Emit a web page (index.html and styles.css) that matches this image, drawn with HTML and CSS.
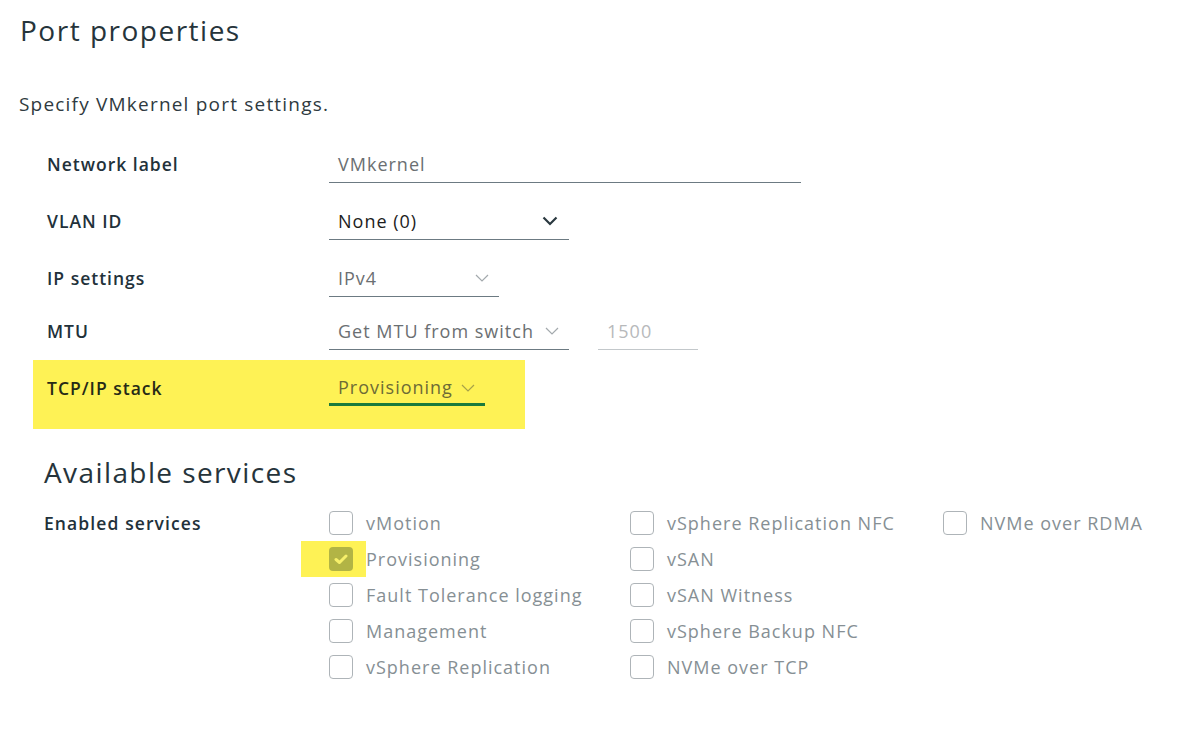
FILE: index.html
```html
<!doctype html>
<html lang="en-us">
  <head>
    <meta charset="utf-8">
    <title>Port properties</title>
    <link rel="stylesheet" href="styles.css">
  </head>
  <body>
    <h1 class="title">Port properties</h1>
    <p class="intro">Specify VMkernel port settings.</p>

    <div class="form">
        <div class="row r1">
            <span class="label">Network label</span>
            <div class="field text wide"><span class="val muted">VMkernel</span></div>
        </div>
        <div class="row r2">
            <span class="label">VLAN ID</span>
            <div class="field select w240">
                <span class="val dark">None (0)</span>
                <svg class="chev bold" width="16" height="10" viewBox="0 0 16 10"><path d="M1.5 1.5 L8 8 L14.5 1.5" /></svg>
            </div>
        </div>
        <div class="row r3">
            <span class="label">IP settings</span>
            <div class="field select w170">
                <span class="val muted">IPv4</span>
                <svg class="chev" width="14" height="8" viewBox="0 0 14 8"><path d="M1 1 L7 7 L13 1" /></svg>
            </div>
        </div>
        <div class="row r4">
            <span class="label">MTU</span>
            <div class="field select w240">
                <span class="val muted">Get MTU from switch</span>
                <svg class="chev" width="14" height="8" viewBox="0 0 14 8"><path d="M1 1 L7 7 L13 1" /></svg>
            </div>
            <div class="field text w100 off"><span class="val faint">1500</span></div>
        </div>
        <div class="row hl">
            <span class="label">TCP/IP stack</span>
            <div class="field select w156 focus">
                <span class="val olive">Provisioning</span>
                <svg class="chev" width="14" height="8" viewBox="0 0 14 8"><path d="M1 1 L7 7 L13 1" /></svg>
            </div>
        </div>
    </div>

    <h2 class="section">Available services</h2>
    <div class="services">
        <span class="label">Enabled services</span>
        <div class="col c1">
            <label class="cb"><span class="box"></span>vMotion</label>
            <label class="cb"><span class="mark"><span class="box checked"><svg width="14" height="11" viewBox="0 0 14 11"><path d="M2 5.5 L5.5 8.5 L12 2" /></svg></span></span>Provisioning</label>
            <label class="cb"><span class="box"></span>Fault Tolerance logging</label>
            <label class="cb"><span class="box"></span>Management</label>
            <label class="cb"><span class="box"></span>vSphere Replication</label>
        </div>
        <div class="col c2">
            <label class="cb"><span class="box"></span>vSphere Replication NFC</label>
            <label class="cb"><span class="box"></span>vSAN</label>
            <label class="cb"><span class="box"></span>vSAN Witness</label>
            <label class="cb"><span class="box"></span>vSphere Backup NFC</label>
            <label class="cb"><span class="box"></span>NVMe over TCP</label>
        </div>
        <div class="col c3">
            <label class="cb"><span class="box"></span>NVMe over RDMA</label>
        </div>
    </div>
  </body>
</html>
```

FILE: styles.css
```css
* { box-sizing: border-box; }
body { margin: 0; padding: 10px 0 0 0; font-family: "Open Sans", sans-serif; font-size: 18px; letter-spacing: 1px; color: #2b3940; background: #fff; }

h1.title { margin: 0 0 0 20px; font-size: 28px; font-weight: 400; line-height: 40px; letter-spacing: 1.5px; color: #26343b; }
p.intro { margin: 42px 0 0 19px; font-size: 19px; line-height: 24px; letter-spacing: 1.2px; color: #2f3a40; }

div.form { margin: 30px 0 0 33px; }
div.row { display: flex; align-items: flex-start; padding-left: 14px; }
div.row span.label { width: 282px; line-height: 36px; font-weight: 600; font-size: 17.5px; letter-spacing: 1px; color: #22313a; }
div.r1, div.r2 { margin-bottom: 20px; }
div.r3 { margin-bottom: 16px; }
div.r4 { margin-bottom: 10px; }
div.hl { width: 492px; height: 69px; padding-top: 10px; background: #fef255; }
div.hl span.label { color: #262a16; }

div.field { display: flex; align-items: center; height: 37px; border-bottom: 1px solid #6c7a82; padding: 0 10px 1px 9px; }
div.field span.val { flex: 1; line-height: 36px; }
div.wide { width: 472px; }
div.w240 { width: 240px; }
div.w170 { width: 170px; }
div.w156 { width: 156px; }
div.w100 { width: 100px; margin-left: 29px; }
div.off { border-bottom-color: #c3c8cb; }
div.focus { height: 36px; border-bottom: 3px solid #1a7a3c; padding: 2px 10px 0 9px; }
div.focus span.val { line-height: 31px; }

span.muted { color: #6b6f72; }
span.dark { color: #1c1c1c; }
span.faint { color: #b7b9bb; }
span.olive { color: #6d6b36; }

svg.chev { fill: none; stroke: #a3a9ad; stroke-width: 1.2; margin-top: 1px; }
svg.chev.bold { stroke: #2b3940; stroke-width: 2.2; margin-right: 1px; }
div.focus svg.chev { stroke: #a7a249; }

h2.section { margin: 25px 0 0 44px; font-size: 28px; font-weight: 400; line-height: 36px; letter-spacing: 1.4px; color: #26343b; }

div.services { display: flex; margin: 15px 0 0 44px; }
div.services span.label { width: 285px; line-height: 36px; font-weight: 600; font-size: 17.5px; letter-spacing: 1.1px; color: #22313a; }
div.col { display: flex; flex-direction: column; }
div.c1 { width: 301px; }
div.c2 { width: 313px; }
label.cb { display: flex; align-items: center; height: 36px; color: #868f94; }
span.box { display: inline-flex; flex: none; align-items: center; justify-content: center; width: 24px; height: 24px; border: 1px solid #aeb4b8; border-radius: 4px; margin-right: 13px; background: #fff; }
span.mark { display: flex; flex: none; align-items: center; width: 65px; height: 36px; margin-left: -28px; padding-left: 28px; background: #fef255; }
span.box.checked { border: none; background: #b2b445; margin-right: 0; }
span.box.checked svg { fill: none; stroke: #f7f06a; stroke-width: 3; stroke-linecap: round; stroke-linejoin: round; }
```
